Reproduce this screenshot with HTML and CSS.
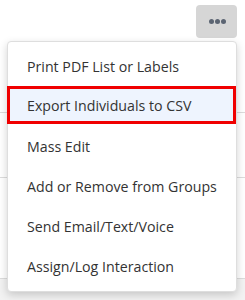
FILE: index.html
```html
<!DOCTYPE html>
<html>
  <head>
    <meta charset="utf-8">
    <link rel="stylesheet" href="styles.css">
  </head>
  <body>
    <div class="page">
      <div class="toolbar">
        <button class="more-btn" aria-label="More actions">
          <span class="dot"></span><span class="dot"></span><span class="dot"></span>
        </button>
      </div>
      <div class="rows">
        <div class="row row-1"></div>
        <div class="row row-2"></div>
        <div class="row row-3"></div>
        <div class="row-foot"></div>
      </div>

      <div class="menu">
        <div class="menu-item">Print PDF List or Labels</div>
        <div class="menu-item active">Export Individuals to CSV</div>
        <div class="menu-item">Mass Edit</div>
        <div class="menu-item">Add or Remove from Groups</div>
        <div class="menu-item">Send Email/Text/Voice</div>
        <div class="menu-item">Assign/Log Interaction</div>
      </div>
    </div>
  </body>
</html>
```

FILE: styles.css
```css
body {
  margin: 0;
  padding: 0;
  background-color: #ffffff;
  font-family: 'Open Sans', 'Noto Sans', sans-serif;
}
.page {
  position: relative;
  width: 245px;
  height: 300px;
  overflow: hidden;
}
.toolbar {
  display: flex;
  justify-content: flex-end;
  padding: 5px 8px 0 0;
}
.more-btn {
  width: 41px;
  height: 33px;
  border: none;
  border-radius: 4px;
  background-color: #d6d6d6;
  display: flex;
  align-items: center;
  justify-content: center;
  gap: 1px;
  padding: 0 0 0 1px;
  cursor: pointer;
}
.dot {
  width: 5px;
  height: 5px;
  border-radius: 50%;
  background-color: #5b6472;
}
.rows {
  display: flex;
  flex-direction: column;
}
.row {
  border-bottom: 1px solid #dcdcdc;
}
.row-1 {
  height: 74px;
}
.row-2 {
  height: 64px;
}
.row-3 {
  height: 100px;
}
.row-foot {
  height: 40px;
  background-color: #f2f2f2;
}
.menu {
  position: absolute;
  top: 41px;
  left: 7px;
  width: 228px;
  padding: 4px 0 5px 0;
  background-color: white;
  border: 1px solid #dedede;
  border-radius: 4px;
  box-shadow: 0 3px 8px rgba(0, 0, 0, 0.18);
}
.menu-item {
  height: 40px;
  display: flex;
  align-items: center;
  padding-left: 19px;
  font-size: 14.2px;
  color: #333333;
  white-space: nowrap;
}
.menu-item.active {
  box-sizing: border-box;
  height: 38px;
  margin: 0 0 2px -1px;
  padding-left: 17px;
  border: 3px solid #f00000;
  background-color: #eef4fe;
}
```
